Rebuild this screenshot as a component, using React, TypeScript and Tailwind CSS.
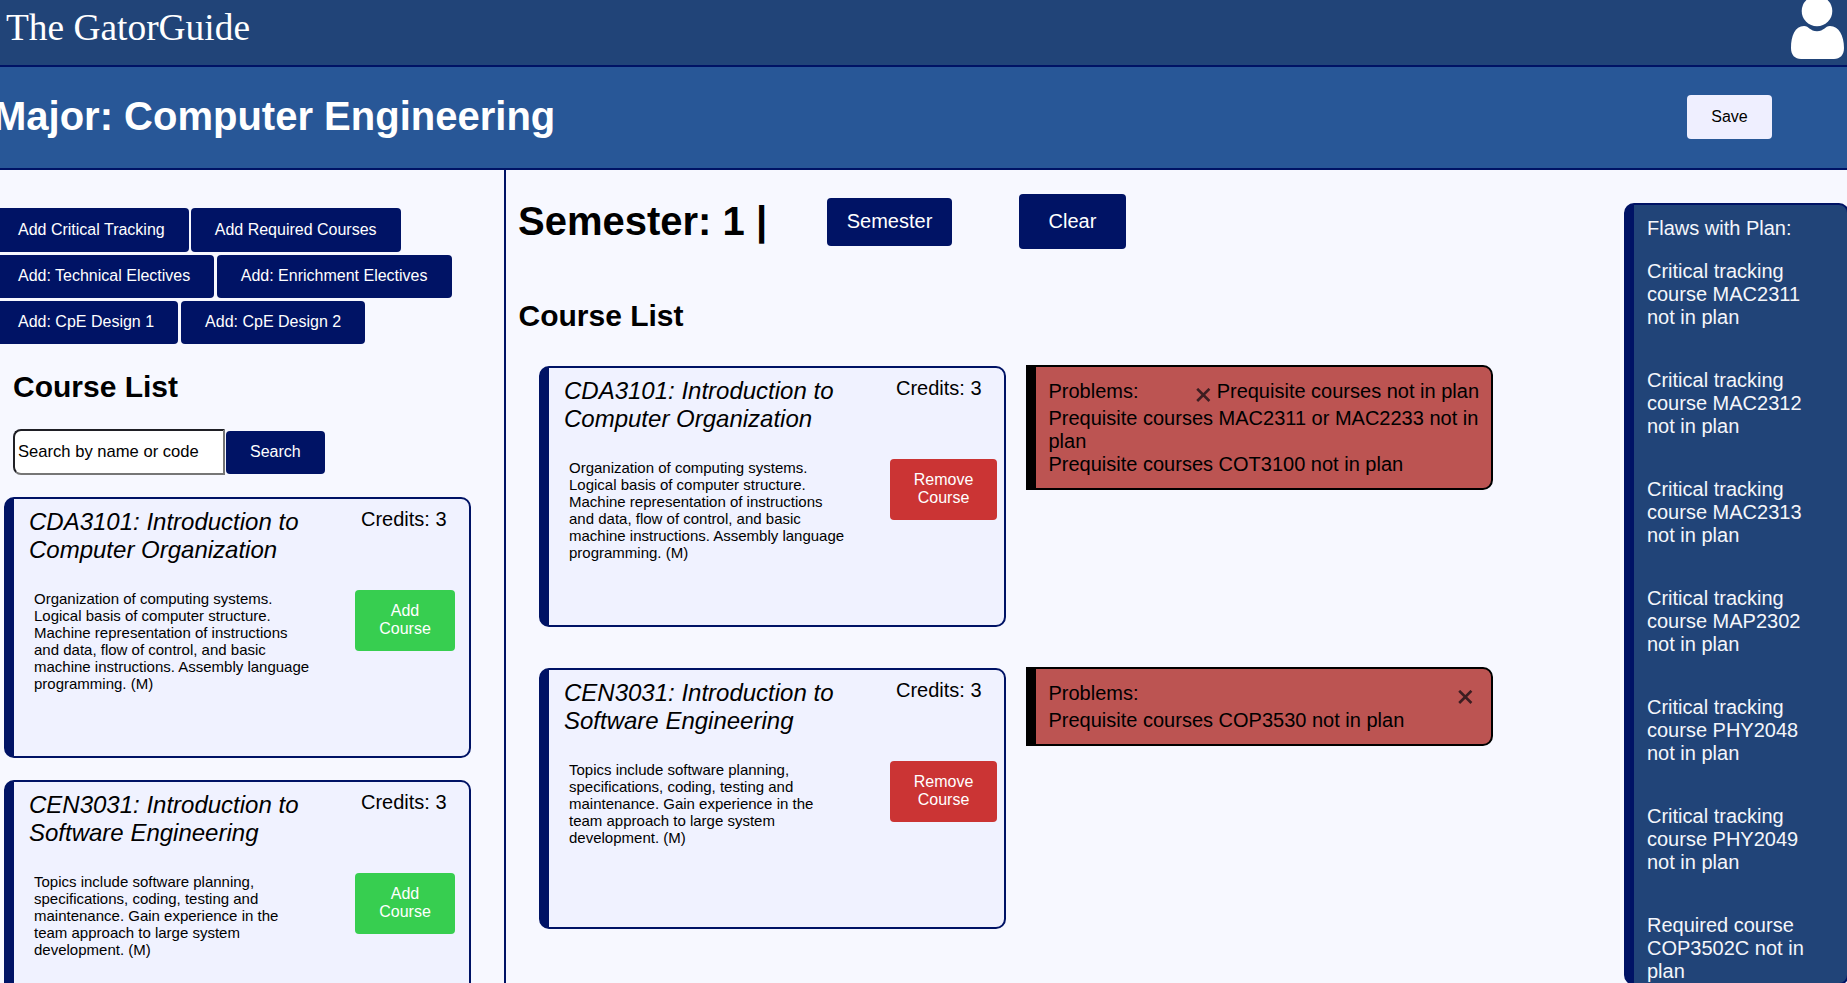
import React from "react";

const courses = [
  {
    title: "CDA3101: Introduction to Computer Organization",
    text: "Organization of computing systems. Logical basis of computer structure. Machine representation of instructions and data, flow of control, and basic machine instructions. Assembly language programming. (M)",
  },
  {
    title: "CEN3031: Introduction to Software Engineering",
    text: "Topics include software planning, specifications, coding, testing and maintenance. Gain experience in the team approach to large system development. (M)",
  },
];

const flaws = [
  "Critical tracking course MAC2311 not in plan",
  "Critical tracking course MAC2312 not in plan",
  "Critical tracking course MAC2313 not in plan",
  "Critical tracking course MAP2302 not in plan",
  "Critical tracking course PHY2048 not in plan",
  "Critical tracking course PHY2049 not in plan",
  "Required course COP3502C not in plan",
];

function NavyButton({ children }: { children: React.ReactNode }) {
  return (
    <button className="h-full whitespace-nowrap rounded-[4px] bg-[#001365] px-6 pb-px text-base leading-[18px] text-white">
      {children}
    </button>
  );
}

function CourseCard({ title, text, remove }: { title: string; text: string; remove?: boolean }) {
  return (
    <div className="flex h-[261px] w-[467px] shrink-0 rounded-[10px] border-2 border-l-[10px] border-[#001365] bg-[#f0f2ff]">
      <div className="w-[341px] pl-[15px] pt-[9px]">
        <h3 className="w-[290px] text-[24px] italic leading-[28px]">{title}</h3>
        <p className="ml-[5px] mt-[26px] w-[280px] text-[15px] leading-[17px]">{text}</p>
      </div>
      <div className="w-[114px] shrink-0">
        <p className="ml-[6px] mt-[9px] text-[20px] leading-[23px]">Credits: 3</p>
        {remove ? (
          <button className="mt-[59px] h-[61px] w-[107px] rounded-[4px] bg-[#cb3434] pb-[2px] text-base leading-[18px] text-white">
            Remove<br />Course
          </button>
        ) : (
          <button className="mt-[59px] h-[61px] w-[100px] rounded-[4px] bg-[#37ce50] pb-px text-base leading-[18px] text-white">
            Add<br />Course
          </button>
        )}
      </div>
    </div>
  );
}

function CloseIcon() {
  return (
    <svg width="15" height="14" viewBox="0 0 15 14" className="shrink-0">
      <path d="M1.2 0.8L13.4 13M13.4 0.8L1.2 13" stroke="#3c1d21" strokeWidth="2.6" fill="none" />
    </svg>
  );
}

export default function App() {
  return (
    <div className="flex h-[983px] w-[1847px] flex-col overflow-hidden bg-[#f7f8ff] font-['Liberation_Sans',Arial,sans-serif] text-black">
      <header className="flex h-[67px] shrink-0 justify-between border-b-2 border-[#001365] bg-[#214478] pl-[6px] pr-[3px]">
        <div className="pt-[6px] font-['Liberation_Serif',serif] text-[37.4px] leading-[44px] text-white">The GatorGuide</div>
        <svg width="53" height="59" viewBox="0 0 53 59" fill="#fff">
          <circle cx="26" cy="11" r="15.3" />
          <path d="M13 26C18 26 19 31.3 26 31.3C33 31.3 34 26 39 26C48 26 53 36 53 48C53 55 49 59 43 59H10C4 59 0 55 0 48C0 36 4 26 13 26Z" />
        </svg>
      </header>
      <div className="flex h-[103px] shrink-0 items-start justify-between border-b-2 border-[#001365] bg-[#285797] pr-[75px]">
        <h1 className="-ml-[7px] mt-[26px] text-[40px] font-bold leading-[46px] text-white">Major: Computer Engineering</h1>
        <button className="mt-[28px] h-[44px] w-[85px] rounded-[4px] bg-[#efefff] pb-px text-base leading-[18px]">Save</button>
      </div>
      <div className="flex min-h-0 flex-1">
        <aside className="w-[506px] shrink-0 overflow-hidden border-r-2 border-[#001365]">
          <div className="-ml-[6px] mt-[38px] flex flex-col gap-[3px]">
            <div className="flex h-[44px] gap-[2px]">
              <NavyButton>Add Critical Tracking</NavyButton>
              <NavyButton>Add Required Courses</NavyButton>
            </div>
            <div className="flex h-[43px] gap-[2.5px]">
              <NavyButton>Add: Technical Electives</NavyButton>
              <NavyButton>Add: Enrichment Electives</NavyButton>
            </div>
            <div className="flex h-[43px] gap-[3px]">
              <NavyButton>Add: CpE Design 1</NavyButton>
              <NavyButton>Add: CpE Design 2</NavyButton>
            </div>
          </div>
          <h2 className="ml-[13px] mt-[26px] text-[30px] font-bold leading-[34px]">Course List</h2>
          <div className="ml-[13px] mt-[25px] flex h-[46px] items-center gap-[1px]">
            <div className="h-[46px] w-[212px] rounded-l-[8px] border-2 border-b-[#767676] border-l-[#1f1f25] border-r-[#767676] border-t-[#1f1f25] bg-white pl-[3px] pt-[11px] text-[16.6px] leading-[20px]">
              Search by name or code
            </div>
            <div className="h-[43px]">
              <NavyButton>Search</NavyButton>
            </div>
          </div>
          <div className="ml-[4px] mt-[22px] flex flex-col gap-[22px]">
            {courses.map((c) => (
              <CourseCard key={c.title} title={c.title} text={c.text} />
            ))}
          </div>
        </aside>
        <main className="flex-1">
          <div className="flex items-start pl-[12px] pt-[24px]">
            <h1 className="mt-[4px] w-[309px] text-[40px] font-bold leading-[46px]">Semester: 1 |</h1>
            <button className="mt-[4px] h-[48px] w-[125px] rounded-[4px] bg-[#001365] pb-px text-[20px] leading-[23px] text-white">Semester</button>
            <button className="ml-[67px] h-[55px] w-[107px] rounded-[4px] bg-[#001365] text-[20px] leading-[23px] text-white">Clear</button>
          </div>
          <h2 className="ml-[12.5px] mt-[50px] text-[30px] font-bold leading-[34px]">Course List</h2>
          <div className="ml-[33px] mt-[33px] flex flex-col gap-[41px]">
            <div className="flex items-start gap-[20px]">
              <CourseCard title={courses[0].title} text={courses[0].text} remove />
              <div className="-mt-px h-[125px] w-[467px] rounded-r-[10px] border-2 border-l-[10px] border-black bg-[#bc5452] pl-[12.5px] pr-[12px] pt-[13px] text-[20px] leading-[23px]">
                <div className="flex h-[27px] justify-between">
                  <span>Problems:</span>
                  <span className="flex gap-[6px]">
                    <span className="pt-[8px]"><CloseIcon /></span>
                    <span>Prequisite courses not in plan</span>
                  </span>
                </div>
                <p className="-mr-[8px]">Prequisite courses MAC2311 or MAC2233 not in<br />plan</p>
                <p>Prequisite courses COT3100 not in plan</p>
              </div>
            </div>
            <div className="flex items-start gap-[20px]">
              <CourseCard title={courses[1].title} text={courses[1].text} remove />
              <div className="-mt-px h-[79px] w-[467px] rounded-r-[10px] border-2 border-l-[10px] border-black bg-[#bc5452] pl-[12.5px] pr-[18px] pt-[13px] text-[20px] leading-[23px]">
                <div className="flex h-[27px] justify-between">
                  <span>Problems:</span>
                  <span className="pt-[8px]"><CloseIcon /></span>
                </div>
                <p>Prequisite courses COP3530 not in plan</p>
              </div>
            </div>
          </div>
        </main>
        <aside className="mt-[33px] h-[782px] w-[223px] shrink-0">
          <div className="h-[782px] w-[225px] overflow-hidden rounded-[10px] border-2 border-l-[10px] border-[#001365] bg-[#214478] pl-[13px] pt-[12px] text-[20px] leading-[23px] text-[#f4f6fb]">
            <p>Flaws with Plan:</p>
            <div className="mt-[20px] flex w-[170px] flex-col gap-[40px]">
              {flaws.map((f) => (
                <p key={f}>{f}</p>
              ))}
            </div>
          </div>
        </aside>
      </div>
    </div>
  );
}
